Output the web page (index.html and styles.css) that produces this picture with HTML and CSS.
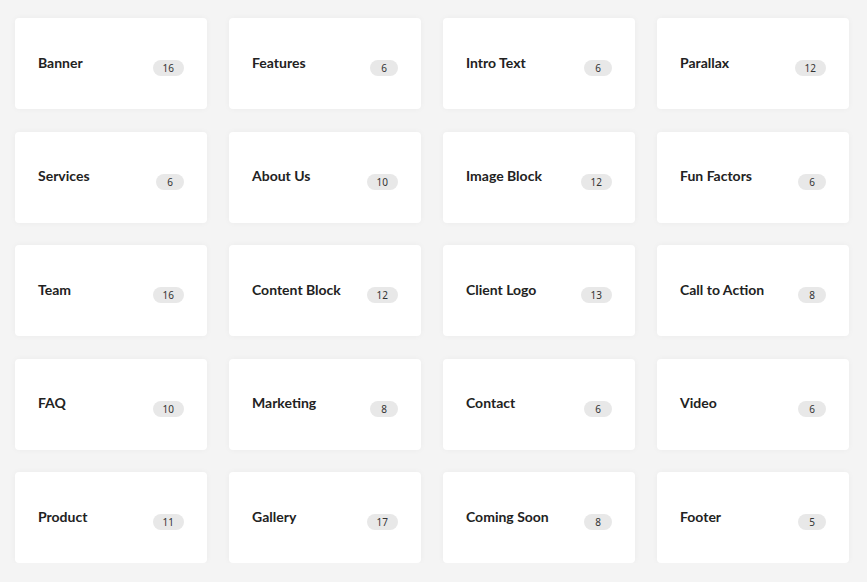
FILE: index.html
```html
<!DOCTYPE html>
<html>
<head>
    <title>Blocks</title>
    <link rel="stylesheet" href="styles.css">
</head>
<body>
    <div class="blocks">
        <div class="block"><span class="block-name">Banner</span><span class="count">16</span></div>
        <div class="block"><span class="block-name">Features</span><span class="count">6</span></div>
        <div class="block"><span class="block-name">Intro Text</span><span class="count">6</span></div>
        <div class="block"><span class="block-name">Parallax</span><span class="count">12</span></div>

        <div class="block"><span class="block-name">Services</span><span class="count">6</span></div>
        <div class="block"><span class="block-name">About Us</span><span class="count">10</span></div>
        <div class="block"><span class="block-name">Image Block</span><span class="count">12</span></div>
        <div class="block"><span class="block-name">Fun Factors</span><span class="count">6</span></div>

        <div class="block"><span class="block-name">Team</span><span class="count">16</span></div>
        <div class="block"><span class="block-name">Content Block</span><span class="count">12</span></div>
        <div class="block"><span class="block-name">Client Logo</span><span class="count">13</span></div>
        <div class="block"><span class="block-name">Call to Action</span><span class="count">8</span></div>

        <div class="block"><span class="block-name">FAQ</span><span class="count">10</span></div>
        <div class="block"><span class="block-name">Marketing</span><span class="count">8</span></div>
        <div class="block"><span class="block-name">Contact</span><span class="count">6</span></div>
        <div class="block"><span class="block-name">Video</span><span class="count">6</span></div>

        <div class="block"><span class="block-name">Product</span><span class="count">11</span></div>
        <div class="block"><span class="block-name">Gallery</span><span class="count">17</span></div>
        <div class="block"><span class="block-name">Coming Soon</span><span class="count">8</span></div>
        <div class="block"><span class="block-name">Footer</span><span class="count">5</span></div>
    </div>
</body>
</html>
```

FILE: styles.css
```css
body {
    margin: 0;
    font-family: Lato, "Noto Sans", sans-serif;
    background-color: #f4f4f4;
}

.blocks {
    display: grid;
    grid-template-columns: repeat(4, 192px);
    grid-auto-rows: 91px;
    column-gap: 22px;
    row-gap: 22.5px;
    padding: 18px 0 0 15px;
}

.block {
    display: flex;
    align-items: center;
    justify-content: space-between;
    padding: 0 23px 0 23px;
    background-color: #fff;
    border-radius: 4px;
    box-shadow: 0 0 6px rgba(0, 0, 0, 0.04);
}

.block-name {
    font-size: 14px;
    font-weight: 700;
    color: #222;
    margin-top: -3px;
}

.count {
    min-width: 8px;
    padding: 0 10px;
    height: 16px;
    line-height: 16px;
    margin-top: 9px;
    text-align: center;
    font-family: "Noto Sans", sans-serif;
    font-size: 10px;
    color: #333;
    background-color: #e8e8e8;
    border-radius: 8px;
}
```
